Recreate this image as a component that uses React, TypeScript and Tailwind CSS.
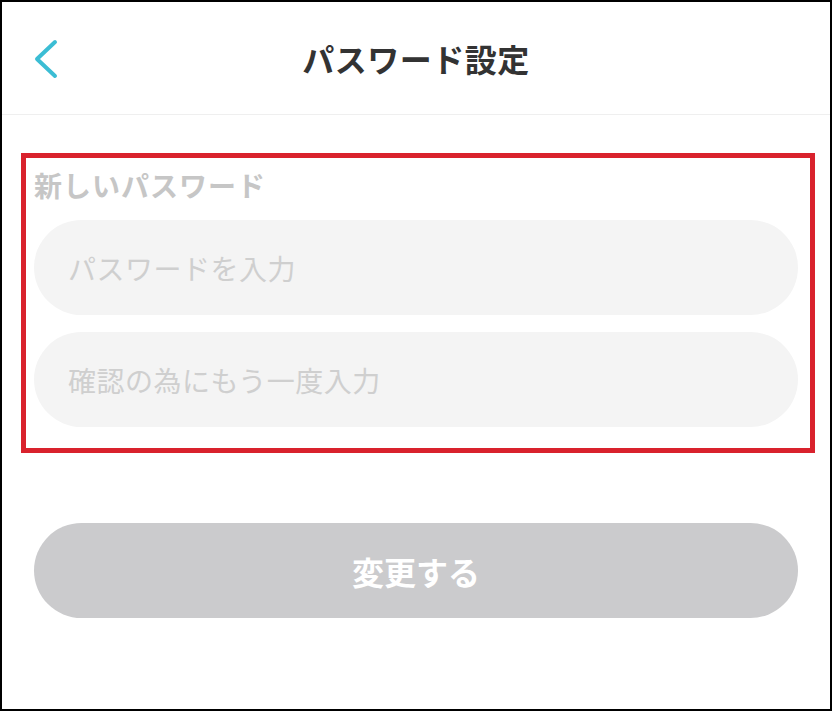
const FONT = "font-['Noto_Sans_CJK_JP','Noto_Sans',sans-serif]";

function Field({ placeholder }: { placeholder: string }) {
  return (
    <input
      type="password"
      placeholder={placeholder}
      className={`h-[95px] w-full rounded-full bg-[#f4f4f4] pl-[34px] pr-6 text-[28px] tracking-[0.5px] text-[#333] outline-none placeholder:text-[#cfcfcf] ${FONT}`}
    />
  );
}

export default function App() {
  return (
    <div className={`flex h-[711px] w-[832px] flex-col border-2 border-black bg-white ${FONT}`}>
      <header className="relative flex h-[113px] shrink-0 items-center justify-center border-b border-[#efefef]">
        <button className="absolute left-[31px] top-[37px] text-[#3bbdd4]">
          <svg width="26" height="40" viewBox="0 0 26 40" fill="none">
            <path d="M22 3 L4 20 L22 37" stroke="currentColor" strokeWidth="4" strokeLinecap="round" strokeLinejoin="round" />
          </svg>
        </button>
        <h1 className="text-[32px] font-bold leading-none tracking-[0.5px] text-[#333]">パスワード設定</h1>
      </header>

      <main className="flex flex-col px-8 pt-[56px]">
        <div className="relative">
          {/* annotation box */}
          <div className="pointer-events-none absolute -bottom-[26px] -left-[13px] -right-[17px] -top-[18px] border-[5px] border-[#d9222d]" />
          <p className="text-[28px] font-bold leading-[28px] tracking-[1px] text-[#c6c6c6]">新しいパスワード</p>
          <div className="mt-[21px] flex flex-col gap-[17px]">
            <Field placeholder="パスワードを入力" />
            <Field placeholder="確認の為にもう一度入力" />
          </div>
        </div>

        <button className="mt-[96px] h-[95px] w-full rounded-full bg-[#cbcbcd] text-[32px] font-bold text-white">
          変更する
        </button>
      </main>
    </div>
  );
}
